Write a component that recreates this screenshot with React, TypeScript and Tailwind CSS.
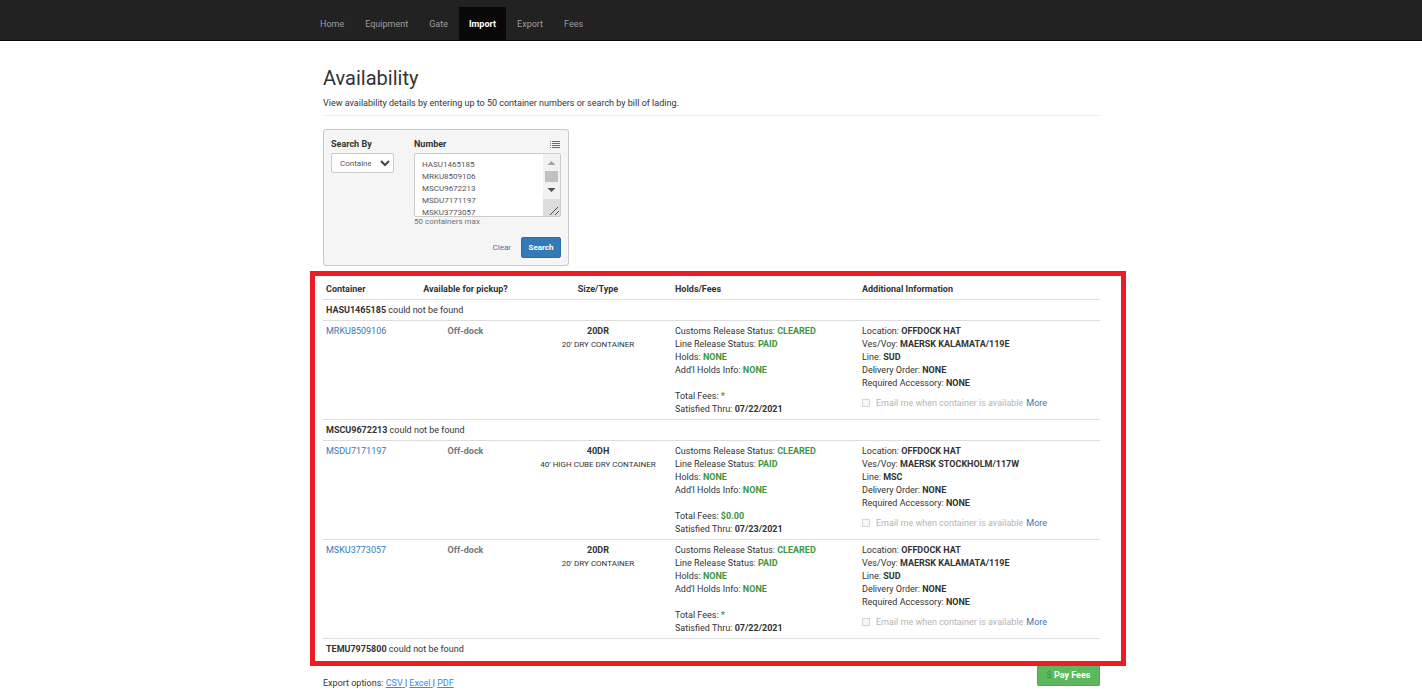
import React, { useState } from "react";
import clsx from "clsx";

const navItems = ["Home", "Equipment", "Gate", "Import", "Export", "Fees"];

type Container = {
  id: string;
  found: boolean;
  size?: string;
  type?: string;
  fees?: string;
  thru?: string;
  vessel?: string;
  line?: string;
};

const containers: Container[] = [
  { id: "HASU1465185", found: false },
  {
    id: "MRKU8509106",
    found: true,
    size: "20DR",
    type: "20' DRY CONTAINER",
    fees: "*",
    thru: "07/22/2021",
    vessel: "MAERSK KALAMATA/119E",
    line: "SUD",
  },
  { id: "MSCU9672213", found: false },
  {
    id: "MSDU7171197",
    found: true,
    size: "40DH",
    type: "40' HIGH CUBE DRY CONTAINER",
    fees: "$0.00",
    thru: "07/23/2021",
    vessel: "MAERSK STOCKHOLM/117W",
    line: "MSC",
  },
  {
    id: "MSKU3773057",
    found: true,
    size: "20DR",
    type: "20' DRY CONTAINER",
    fees: "*",
    thru: "07/22/2021",
    vessel: "MAERSK KALAMATA/119E",
    line: "SUD",
  },
  { id: "TEMU7975800", found: false },
];

const Navbar = () => {
  return (
    <nav className="border-b border-[#080808] bg-[#222222]">
      <div className="mx-auto flex max-w-[802px] gap-px pt-[7px]">
        {navItems.map((item) => (
          <a
            key={item}
            href="#"
            className={clsx(
              "px-[10px] pb-[9px] pt-[11px]",
              item === "Import"
                ? "bg-[#080808] font-bold text-white"
                : "text-[#9d9d9d]"
            )}
          >
            {item}
          </a>
        ))}
      </div>
    </nav>
  );
};

const ListIcon = () => {
  return (
    <svg width="11" height="8" viewBox="0 0 11 8" shapeRendering="crispEdges">
      {[1, 3, 5, 7].map((y) => (
        <g key={y}>
          <rect x="0" y={y} width="1" height="1" fill="#7d8a96" />
          <rect x="2" y={y} width="8" height="1" fill="#337ab7" />
        </g>
      ))}
    </svg>
  );
};

const Scrollbar = () => {
  return (
    <svg width="17" height="62" viewBox="0 0 17 62" className="shrink-0">
      <rect width="17" height="45" fill="#f1f1f1" />
      <path d="M4.5 11 L8.5 7 L12.5 11 Z" fill="#a3a3a3" />
      <rect x="2" y="17" width="13" height="11" fill="#c1c1c1" />
      <path d="M4.5 34 L8.5 38 L12.5 34 Z" fill="#505050" />
      <rect y="45" width="17" height="17" fill="#dcdcdc" />
      <path d="M7 61 L15 53 M12 61 L16 57" stroke="#505050" strokeWidth="1" />
    </svg>
  );
};

const SearchPanel = () => {
  const [numbers, setNumbers] = useState(
    containers.map((c) => c.id).join("\n")
  );

  return (
    <form
      className="w-[246px] rounded-[3px] border border-[#c8c8c8] bg-[#f5f5f5] p-[7px]"
      onSubmit={(e) => e.preventDefault()}
    >
      <div className="flex justify-between">
        <div className="flex w-[63px] flex-col gap-[2px]">
          <label htmlFor="searchBy" className="font-bold leading-[14px]">
            Search By
          </label>
          <div className="relative">
            <select
              id="searchBy"
              className="h-5 w-full appearance-none rounded-[2px] border border-[#cccccc] bg-white pl-2 pr-[22px] text-[8px] text-[#555555]"
            >
              <option>Container</option>
              <option>Bill of Lading</option>
            </select>
            <svg
              width="10"
              height="7"
              viewBox="0 0 10 7"
              className="pointer-events-none absolute right-1 top-[7px]"
            >
              <path
                d="M1 1 L5 5 L9 1"
                fill="none"
                stroke="#444444"
                strokeWidth="2"
              />
            </svg>
          </div>
        </div>
        <div className="w-[147px]">
          <div className="mb-[2px] flex h-[14px] items-center justify-between">
            <label htmlFor="numbers" className="font-bold leading-[14px]">
              Number
            </label>
            <button type="button" aria-label="List">
              <ListIcon />
            </button>
          </div>
          <div className="flex overflow-hidden rounded-[2px] border border-[#cccccc] bg-white">
            <textarea
              id="numbers"
              value={numbers}
              onChange={(e) => setNumbers(e.target.value)}
              className="h-[62px] min-w-0 flex-1 resize-none overflow-hidden pl-[7px] pt-[5px] text-[8px] leading-3 text-[#555555] outline-none"
            />
            <Scrollbar />
          </div>
          <p className="text-[8px] leading-[10px] text-[#737373]">
            50 containers max
          </p>
        </div>
      </div>
      <div className="mt-[10px] flex items-center justify-end gap-[10px] text-[8px]">
        <button
          type="button"
          className="text-[#337ab7]"
          onClick={() => setNumbers("")}
        >
          Clear
        </button>
        <button
          type="submit"
          className="h-[21px] w-10 rounded-[2px] border border-[#2e6da4] bg-[#337ab7] font-bold text-white"
        >
          Search
        </button>
      </div>
    </form>
  );
};

const Field = ({
  label,
  value,
  green,
}: {
  label: string;
  value?: string;
  green?: boolean;
}) => {
  return (
    <div>
      {label}:{" "}
      <span className={clsx("font-bold", green && "text-[#3c963c]")}>
        {value}
      </span>
    </div>
  );
};

const ContainerRow = ({ item }: { item: Container }) => {
  if (!item.found) {
    return (
      <tr className="border-t border-[#dddddd]">
        <td colSpan={5} className="px-[3px] pb-[3px] pt-1">
          <b>{item.id}</b> could not be found
        </td>
      </tr>
    );
  }

  return (
    <tr className="border-t border-[#dddddd] align-top">
      <td className="px-[3px] pb-[3px] pt-1">
        <a href="#" className="text-[#337ab7]">
          {item.id}
        </a>
      </td>
      <td className="px-[3px] pb-[3px] pt-1 text-center font-bold text-[#777777]">
        Off-dock
      </td>
      <td className="px-[3px] pb-[3px] pt-1 text-center">
        <div className="font-bold">{item.size}</div>
        <div className="whitespace-nowrap text-[8px]">{item.type}</div>
      </td>
      <td className="px-[3px] pb-[3px] pt-1">
        <Field label="Customs Release Status" value="CLEARED" green />
        <Field label="Line Release Status" value="PAID" green />
        <Field label="Holds" value="NONE" green />
        <Field label="Add'l Holds Info" value="NONE" green />
        <div className="mt-[13px]">
          <Field label="Total Fees" value={item.fees} green />
        </div>
        <Field label="Satisfied Thru" value={item.thru} />
      </td>
      <td className="px-[3px] pb-[3px] pt-1">
        <Field label="Location" value="OFFDOCK HAT" />
        <Field label="Ves/Voy" value={item.vessel} />
        <Field label="Line" value={item.line} />
        <Field label="Delivery Order" value="NONE" />
        <Field label="Required Accessory" value="NONE" />
        <div className="mt-[7px] flex items-center gap-[3px]">
          <label className="flex items-start gap-[6px] text-[#b4b4b4]">
            <input
              type="checkbox"
              disabled
              className="mt-[2px] size-2 appearance-none border border-[#d5d5d5] bg-[#f8f8f8]"
            />
            Email me when container is available
          </label>
          <a href="#" className="text-[#337ab7]">
            More
          </a>
        </div>
      </td>
    </tr>
  );
};

const ResultsTable = () => {
  return (
    <div className="relative pb-[7px] pt-[13px]">
      <table className="w-full table-fixed border-collapse">
        <thead>
          <tr className="text-left">
            <th className="w-[84px] px-[3px] pb-[3px] pt-1">Container</th>
            <th className="w-[117px] px-[3px] pb-[3px] pt-1 text-center">
              Available for pickup?
            </th>
            <th className="w-[148px] px-[3px] pb-[3px] pt-1 text-center">
              Size/Type
            </th>
            <th className="w-[187px] px-[3px] pb-[3px] pt-1">Holds/Fees</th>
            <th className="px-[3px] pb-[3px] pt-1">Additional Information</th>
          </tr>
        </thead>
        <tbody>
          {containers.map((item) => (
            <ContainerRow key={item.id} item={item} />
          ))}
        </tbody>
      </table>
      {/* highlight around the results */}
      <div className="pointer-events-none absolute -left-[13px] -right-[26px] bottom-0 top-[5px] z-10 border-5 border-[#ed1c24]" />
    </div>
  );
};

const App = () => {
  return (
    <div className="bg-white font-[Roboto,sans-serif] text-[9px] leading-[13px] text-[#333333]">
      <Navbar />
      <main className="mx-auto max-w-[802px] pl-[13px] pr-3 pt-[26px]">
        <h1 className="text-[20px] leading-[22px]">Availability</h1>
        <p className="mt-2">
          View availability details by entering up to 50 container numbers or
          search by bill of lading.
        </p>
        <hr className="mb-[13px] mt-[5px] border-[#eeeeee]" />
        <SearchPanel />
        <ResultsTable />
        <div className="flex items-start justify-between">
          <div className="pt-[11px]">
            Export options:{" "}
            <a href="#" className="text-[#2a8fee] underline">
              CSV{" "}
            </a>
            |{" "}
            <a href="#" className="text-[#2a8fee] underline">
              Excel{" "}
            </a>
            |{" "}
            <a href="#" className="text-[#2a8fee] underline">
              PDF
            </a>
          </div>
          <button
            type="button"
            className="h-5 w-[63px] rounded-b-[2px] border border-t-0 border-[#4cae4c] bg-[#5cb85c] pb-px font-bold text-white"
          >
            <span className="font-normal text-[#3c963c]">$</span> Pay Fees
          </button>
        </div>
      </main>
    </div>
  );
};

export default App;
